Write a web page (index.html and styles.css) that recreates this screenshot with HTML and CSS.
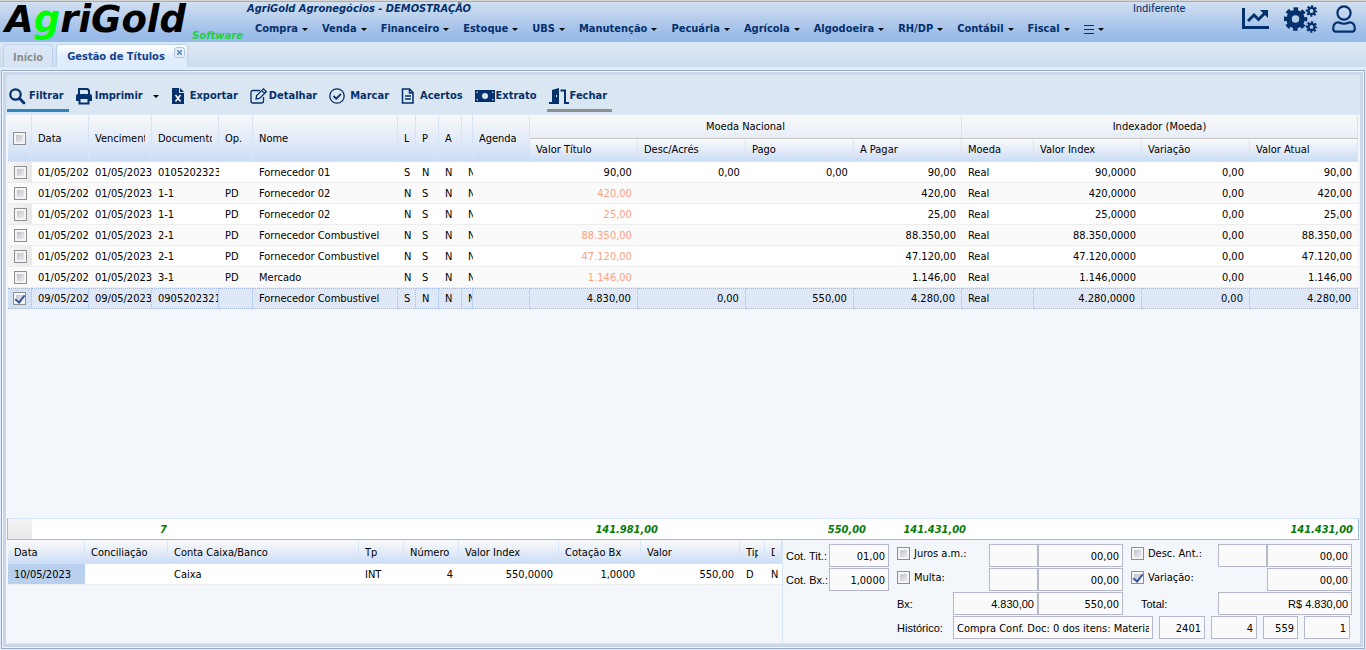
FILE: index.html
```html
<!DOCTYPE html>
<html lang="pt-BR">
<head>
<meta charset="utf-8">
<title>AgriGold Agronegócios - Gestão de Títulos</title>
<link rel="stylesheet" href="styles.css">
</head>
<body>
<header class="top">
  <div class="logo"><span class="logo-name">A<span class="logo-g">g</span>riGold</span><span class="logo-sub">Software</span></div>
  <div class="top-main">
    <div class="company">AgriGold Agronegócios - DEMOSTRAÇÃO</div>
    <nav class="menu">
      <button>Compra</button><button>Venda</button><button>Financeiro</button><button>Estoque</button><button>UBS</button><button>Manutenção</button><button>Pecuária</button><button>Agrícola</button><button>Algodoeira</button><button>RH/DP</button><button>Contábil</button><button>Fiscal</button><button aria-label="Mais"><svg width="10" height="9" viewBox="0 0 10 9"><path d="M0 .5h10M0 4.5h10M0 8.5h10" stroke="#04306c"/></svg></button>
    </nav>
  </div>
  <div class="mood">Indiferente</div>
  <div class="top-icons">
    <button aria-label="Gráficos"><svg width="28" height="22" viewBox="0 0 28 22"><path d="M1.500 0v19.500h25.500" fill="none" stroke="#04306c" stroke-width="3"/><path d="M6 13l6-6 4.500 4.500 7-7" fill="none" stroke="#04306c" stroke-width="3"/><path d="M18 2h8v8z" fill="#04306c"/></svg></button>
    <button aria-label="Configurações"><svg width="34" height="28" viewBox="0 0 34 28" fill="none" stroke="#04306c"><circle cx="11.500" cy="14" r="6.500" stroke-width="5.500"/><circle cx="11.500" cy="14" r="9.800" stroke-width="4" stroke-dasharray="4.400 3.297" stroke-dashoffset="2.200"/><circle cx="27.500" cy="6" r="3.100" stroke-width="2.400"/><circle cx="27.500" cy="6" r="4.600" stroke-width="2.400" stroke-dasharray="2 1.613" stroke-dashoffset="1"/><circle cx="27.500" cy="22" r="3.100" stroke-width="2.400"/><circle cx="27.500" cy="22" r="4.600" stroke-width="2.400" stroke-dasharray="2 1.613" stroke-dashoffset="1"/></svg></button>
    <button aria-label="Usuário"><svg width="24" height="28" viewBox="0 0 24 28" fill="none" stroke="#04306c" stroke-width="2.200"><circle cx="12" cy="8" r="6.600"/><path d="M7 17.500Q12 20 17 17.500C21 17 23 20 22.800 24Q22.500 26.700 20 26.700H4Q1.500 26.700 1.200 24C1 20 3 17 7 17.500z"/></svg></button>
  </div>
</header>

<div class="tabs" role="tablist">
  <button class="tab" role="tab" aria-selected="false">Início</button>
  <div class="tab tab-on"><button role="tab" aria-selected="true">Gestão de Títulos</button><button class="tab-close" aria-label="Fechar aba"><svg width="5" height="5" viewBox="0 0 5 5"><path d="M0 0l5 5M5 0L0 5" stroke="#6f97cc" stroke-width="2"/></svg></button></div>
</div>

<main class="frame"><div class="panel">
  <div class="toolbar">
    <button class="tool tool-blue"><svg width="17" height="17" viewBox="0 0 17 17"><circle cx="6.500" cy="6.500" r="5.200" fill="none" stroke="#04306c" stroke-width="2.200"/><path d="M10.300 10.300l4.700 4.700" stroke="#04306c" stroke-width="2.800" stroke-linecap="round"/></svg><span>Filtrar</span></button>
    <button class="tool"><svg width="16" height="17" viewBox="0 0 16 17"><path d="M3 6V1h8.500L13 2.500V6" fill="none" stroke="#04306c" stroke-width="2"/><path d="M0 8q0-2 2-2h12q2 0 2 2v5h-3v-2H3v2H0z" fill="#04306c"/><path d="M3.500 11v4.500h9V11" fill="none" stroke="#04306c" stroke-width="2"/></svg><span>Imprimir</span><i class="caret"></i></button>
    <button class="tool"><svg width="14" height="16" viewBox="0 0 14 16"><path d="M1 0h7v5h5v11H1z" fill="#04306c"/><path d="M9 0l4 4H9z" fill="#04306c"/><path d="M4.500 7l5 6.500M9.500 7l-5 6.500" stroke="#fff" stroke-width="1.500"/></svg><span>Exportar</span></button>
    <button class="tool tool-near"><svg width="18" height="16" viewBox="0 0 18 16" fill="none" stroke="#04306c" stroke-width="1.300"><path d="M10 2.500H3Q1 2.500 1 4.500V13q0 2 2 2h8.500q2 0 2-2V9"/><path d="M6 11l.7-3.500L13.500.9l2.800 2.800-6.800 6.700zM11.700 2.600l2.800 2.800"/></svg><span>Detalhar</span></button>
    <button class="tool"><svg width="16" height="16" viewBox="0 0 16 16" fill="none" stroke="#04306c"><circle cx="8" cy="8" r="7.200" stroke-width="1.300"/><path d="M4.500 8l2.700 2.700L12 5.800" stroke-width="1.800"/></svg><span>Marcar</span></button>
    <button class="tool"><svg width="14" height="16" viewBox="0 0 14 16" fill="none" stroke="#04306c" stroke-width="1.500"><path d="M1.500 1h7L12 4.500V15H1.500zM8.500 1v4H12M4 8h6M4 11h6"/></svg><span>Acertos</span></button>
    <button class="tool tool-near"><svg width="20" height="12" viewBox="0 0 20 12"><path d="M0 0h20v12H0z" fill="#04306c"/><circle cx="10" cy="6" r="3" fill="#dae6f1"/><path d="M2 3V2h1M17 2h1v1M2 9v1h1M17 10h1V9" stroke="#dae6f1" fill="none"/></svg><span>Extrato</span></button>
    <button class="tool tool-near tool-gray"><svg width="20" height="16" viewBox="0 0 20 16"><path d="M0 14h3V2l7-2v16H0zM7 7v2h1V7z" fill="#04306c" fill-rule="evenodd"/><path d="M11.500 2.500H16V15h4" fill="none" stroke="#04306c" stroke-width="2"/></svg><span>Fechar</span></button>
  </div>

  <div class="grid-area">
  <table class="grid">
    <colgroup><col class="c24"><col class="c57"><col class="c63"><col class="c67"><col class="c34"><col><col class="c18"><col class="c23"><col class="c23"><col class="c11"><col class="c57"><col class="c108"><col class="c108"><col class="c108"><col class="c108"><col class="c72"><col class="c108"><col class="c108"><col class="c108"></colgroup>
    <thead>
      <tr><th rowspan="2" class="ck"><input type="checkbox" aria-label="Selecionar todos"></th><th rowspan="2"><div>Data</div></th><th rowspan="2"><div>Vencimento</div></th><th rowspan="2"><div>Documento</div></th><th rowspan="2"><div>Op.</div></th><th rowspan="2"><div>Nome</div></th><th rowspan="2"><div>L</div></th><th rowspan="2"><div>P</div></th><th rowspan="2"><div>A</div></th><th rowspan="2"></th><th rowspan="2"><div>Agenda</div></th><th colspan="4" class="group">Moeda Nacional</th><th colspan="4" class="group">Indexador (Moeda)</th></tr>
      <tr class="sub"><th>Valor Título</th><th>Desc/Acrés</th><th>Pago</th><th>A Pagar</th><th>Moeda</th><th>Valor Index</th><th>Variação</th><th>Valor Atual</th></tr>
    </thead>
    <tbody>
      <tr><td class="ck"><input type="checkbox" aria-label="Linha 1"></td><td>01/05/2023</td><td>01/05/2023</td><td>01052023231</td><td></td><td>Fornecedor 01</td><td>S</td><td>N</td><td>N</td><td>N</td><td></td><td class="n">90,00</td><td class="n">0,00</td><td class="n">0,00</td><td class="n">90,00</td><td>Real</td><td class="n">90,0000</td><td class="n">0,00</td><td class="n">90,00</td></tr>
      <tr><td class="ck"><input type="checkbox" aria-label="Linha 2"></td><td>01/05/2023</td><td>01/05/2023</td><td>1-1</td><td>PD</td><td>Fornecedor 02</td><td>N</td><td>S</td><td>N</td><td>N</td><td></td><td class="n due">420,00</td><td></td><td></td><td class="n">420,00</td><td>Real</td><td class="n">420,0000</td><td class="n">0,00</td><td class="n">420,00</td></tr>
      <tr><td class="ck"><input type="checkbox" aria-label="Linha 3"></td><td>01/05/2023</td><td>01/05/2023</td><td>1-1</td><td>PD</td><td>Fornecedor 02</td><td>N</td><td>S</td><td>N</td><td>N</td><td></td><td class="n due">25,00</td><td></td><td></td><td class="n">25,00</td><td>Real</td><td class="n">25,0000</td><td class="n">0,00</td><td class="n">25,00</td></tr>
      <tr><td class="ck"><input type="checkbox" aria-label="Linha 4"></td><td>01/05/2023</td><td>01/05/2023</td><td>2-1</td><td>PD</td><td>Fornecedor Combustivel</td><td>N</td><td>S</td><td>N</td><td>N</td><td></td><td class="n due">88.350,00</td><td></td><td></td><td class="n">88.350,00</td><td>Real</td><td class="n">88.350,0000</td><td class="n">0,00</td><td class="n">88.350,00</td></tr>
      <tr><td class="ck"><input type="checkbox" aria-label="Linha 5"></td><td>01/05/2023</td><td>01/05/2023</td><td>2-1</td><td>PD</td><td>Fornecedor Combustivel</td><td>N</td><td>S</td><td>N</td><td>N</td><td></td><td class="n due">47.120,00</td><td></td><td></td><td class="n">47.120,00</td><td>Real</td><td class="n">47.120,0000</td><td class="n">0,00</td><td class="n">47.120,00</td></tr>
      <tr><td class="ck"><input type="checkbox" aria-label="Linha 6"></td><td>01/05/2023</td><td>01/05/2023</td><td>3-1</td><td>PD</td><td>Mercado</td><td>N</td><td>S</td><td>N</td><td>N</td><td></td><td class="n due">1.146,00</td><td></td><td></td><td class="n">1.146,00</td><td>Real</td><td class="n">1.146,0000</td><td class="n">0,00</td><td class="n">1.146,00</td></tr>
      <tr class="sel"><td class="ck"><input type="checkbox" checked aria-label="Linha 7"></td><td>09/05/2023</td><td>09/05/2023</td><td>0905202321</td><td></td><td>Fornecedor Combustivel</td><td>S</td><td>N</td><td>N</td><td>N</td><td></td><td class="n">4.830,00</td><td class="n">0,00</td><td class="n">550,00</td><td class="n">4.280,00</td><td>Real</td><td class="n">4.280,0000</td><td class="n">0,00</td><td class="n">4.280,00</td></tr>
    </tbody>
  </table>
  </div>

  <div class="totals"><span class="t-ck"></span><span class="t-count">7</span><span class="t-title">141.981,00</span><span class="t-paid">550,00</span><span class="t-due">141.431,00</span><span class="t-now">141.431,00</span></div>

  <div class="bottom">
    <div class="moves">
      <table class="grid moves-grid">
        <colgroup><col class="c77"><col class="c83"><col><col class="c45"><col class="c55"><col class="c100"><col class="c82"><col class="c99"><col class="c25"><col class="c17"></colgroup>
        <thead><tr><th><div>Data</div></th><th><div>Conciliação</div></th><th><div>Conta Caixa/Banco</div></th><th><div>Tp</div></th><th><div>Número</div></th><th><div>Valor Index</div></th><th><div>Cotação Bx</div></th><th><div>Valor</div></th><th><div>Tipo</div></th><th><div>D</div></th></tr></thead>
        <tbody><tr><td class="cur">10/05/2023</td><td></td><td>Caixa</td><td>INT</td><td class="n">4</td><td class="n">550,0000</td><td class="n">1,0000</td><td class="n">550,00</td><td>D</td><td>N</td></tr></tbody>
      </table>
    </div>
    <form class="form">
      <div class="quotes">
        <div class="line"><label class="plain w43" for="ct">Cot. Tit.:</label><input id="ct" class="w60" value="01,00"></div>
        <div class="line"><label class="plain w43" for="cb">Cot. Bx.:</label><input id="cb" class="w60" value="1,0000"></div>
      </div>
      <div class="fields">
        <div class="line"><label class="check w92"><input type="checkbox">Juros a.m.:</label><input class="w49" aria-label="Juros %"><input class="w85" value="00,00" aria-label="Juros"><label class="check w87 gap8"><input type="checkbox">Desc. Ant.:</label><input class="w49" aria-label="Desconto %"><input class="w85" value="00,00" aria-label="Desconto"></div>
        <div class="line"><label class="check w92"><input type="checkbox">Multa:</label><input class="w49" aria-label="Multa %"><input class="w85" value="00,00" aria-label="Multa"><label class="check w136 gap8"><input type="checkbox" checked>Variação:</label><input class="w85" value="00,00" aria-label="Variação"></div>
        <div class="line"><label class="plain w56" for="bx">Bx:</label><input id="bx" class="w85 alt" value="4.830,00"><input class="w85" value="550,00" aria-label="Bx valor"><label class="plain w77 gap18" for="tot">Total:</label><input id="tot" class="w134 alt" value="R$ 4.830,00"></div>
        <div class="line line-codes"><label class="plain w56" for="his">Histórico:</label><input id="his" class="w200 left" value="Compra Conf. Doc: 0 dos itens: Material"><input class="w46" value="2401" aria-label="Código 1"><input class="w46" value="4" aria-label="Código 2"><input class="w35" value="559" aria-label="Código 3"><input class="w46" value="1" aria-label="Código 4"></div>
      </div>
    </form>
  </div>
</div></main>
</body>
</html>
```
FILE: styles.css
```css
* { box-sizing: border-box; }
body {
  margin: 0;
  min-height: 100vh;
  display: flex;
  flex-direction: column;
  background: #deecfd;
  color: #000;
  font: 11px/14px "DejaVu Sans Condensed", "DejaVu Sans", sans-serif;
}
button { font: inherit; color: inherit; border: 0; padding: 0; background: none; }
svg { display: block; flex: none; }

.top {
  display: flex;
  height: 42px;
  padding-left: 5px;
  border-top: 1px solid #d5d5d5;
  background: linear-gradient(#d3e1f1, #b5cdec 45%, #99bbe8 85%);
  box-shadow: inset 0 1px #a9acb2;
  color: #04306c;
}
.logo { position: relative; width: 242px; flex: none; color: #000; font-family: "DejaVu Sans", sans-serif; font-weight: bold; font-style: italic; }
.logo-name { display: block; font-size: 37px; line-height: 37px; }
.logo-g { color: #0f0; }
.logo-sub { position: absolute; right: 4px; bottom: 1px; color: #1ed33c; font-size: 10px; line-height: 10px; }
.top-main { flex: 1; min-width: 0; padding-top: 1px; }
.company { font-weight: bold; font-style: italic; }
.menu { display: flex; gap: 14px; padding: 6px 0 0 8px; font-weight: bold; }
.menu button { display: flex; align-items: center; gap: 4px; white-space: nowrap; }
.menu button::after, .caret {
  content: "";
  width: 0;
  border: 3px solid transparent;
  border-top-color: #000;
  border-bottom: 0;
}
.mood { padding-top: 1px; width: 109px; flex: none; font-family: Roboto, sans-serif; }
.top-icons { display: flex; gap: 14px; align-items: center; padding: 0 10px 6px 0; flex: none; }

.tabs {
  display: flex;
  gap: 3px;
  height: 28px;
  padding: 2px 3px 0;
  background: linear-gradient(#dce7f5, #cddded 25px, #deecfd 25px);
  font-weight: bold;
}
.tab {
  height: 23px;
  padding: 3px 9px 0;
  border: 1px solid #bcd2ee;
  border-bottom: 0;
  border-radius: 4px 4px 0 0;
  background: linear-gradient(#dce8f7, #d5e3f3);
  color: #8c8c8c;
}
.tab-on { display: flex; align-items: flex-start; gap: 9px; padding: 2px 2px 0 10px; background: linear-gradient(#fff, #deecfd 60%); color: #15428b; }
.tab-on button:first-child { padding-top: 3px; }
.tab-close { width: 11px; height: 11px; padding: 2px; border: 1px solid #a9c4e8; border-radius: 3px; background: #e8f0fb; }

.frame {
  flex: 1;
  display: flex;
  margin: 0 1px 1px;
  padding: 1px;
  border: 1px solid #99a9c7;
  background: #f0f5fc;
}
.panel { flex: 1; min-width: 0; display: flex; flex-direction: column; border: 3px solid #cbd6e8; background: #f3f6fb; }
.toolbar { display: flex; gap: 5px; height: 40px; padding: 8px 1px 0; background: #dae6f1; border-bottom: 1px solid #deecfd; }
.tool {
  display: flex;
  align-items: center;
  gap: 3px;
  height: 29px;
  padding: 0 5px 0 2px;
  border-bottom: 3px solid transparent;
  color: #04306c;
  font-weight: bold;
}
.tool-near { gap: 1px; }
.tool:nth-child(n+3):not(.tool-near) { gap: 5px; }
.caret { margin-left: 7px; }
.tool-blue { border-bottom-color: #2f86bd; }
.tool-gray { border-bottom-color: #8d9196; }

.grid-area { flex: 1; padding: 0 2px; }
.grid { width: 100%; table-layout: fixed; border-collapse: separate; border-spacing: 0; }
.grid th {
  height: 47px;
  padding: 1px 6px 0;
  border-right: 1px solid #d5e4f7;
  border-bottom: 1px solid #d5e4f7;
  background: linear-gradient(#f9f9fa, #e4ecf8 50%, #cbddf6);
  font-weight: normal;
  text-align: left;
  white-space: nowrap;
  overflow: hidden;
}
.grid th div { overflow: hidden; }
.grid .group { height: 24px; padding-top: 0; background: linear-gradient(#f9f9fa, #e8eef7); border-bottom-color: #c5c5c5; text-align: center; }
.grid .sub th { height: 23px; padding: 0 6px 1px; background: linear-gradient(#f9f9fa, #e4ecf8 50%, #cbddf6); }
.grid td {
  height: 21px;
  padding: 2px 0 0 6px;
  border-bottom: 1px solid #ededed;
  background: #fff;
  overflow: hidden;
  white-space: nowrap;
}
.grid tbody tr:nth-child(even) td { background: #fafafa; }
.grid .n { padding: 2px 6px 0 0; text-align: right; }
.grid .due { color: #ffa083; }
.grid .ck { padding: 1px 0 0; text-align: center; }
.grid tbody td.ck { background: linear-gradient(90deg, #f5f5f5, #e9e9e9); }
.grid .sel td { background: #dfe8f6; border: 1px dotted #a3bae9; border-left: 0; padding-top: 1px; }
.grid .sel td.ck { background: #d3e1f5; padding-top: 0; }
.c11 { width: 11px; } .c17 { width: 17px; } .c18 { width: 18px; } .c23 { width: 23px; }
.c24 { width: 24px; } .c25 { width: 25px; } .c34 { width: 34px; } .c45 { width: 45px; }
.c55 { width: 55px; } .c57 { width: 57px; } .c63 { width: 63px; } .c67 { width: 67px; }
.c72 { width: 72px; } .c77 { width: 77px; } .c82 { width: 82px; } .c83 { width: 83px; }
.c99 { width: 99px; } .c100 { width: 100px; } .c108 { width: 108px; }

input[type="checkbox"] {
  appearance: none;
  position: relative;
  width: 13px;
  height: 13px;
  margin: 0;
  flex: none;
  vertical-align: middle;
  border: 1px solid #8e8f8f;
  background: linear-gradient(135deg, #b4b9c2, #f6f6f6);
  box-shadow: inset 0 0 0 2px #f4f4f4;
}
input[type="checkbox"]:checked::after {
  content: "";
  position: absolute;
  left: 3px;
  top: 0;
  width: 4px;
  height: 8px;
  border: solid #3a55a0;
  border-width: 0 2px 2px 0;
  transform: rotate(38deg);
}

.totals {
  display: flex;
  height: 22px;
  margin: 0 1px;
  border: 1px solid #99bbe8;
  border-top-color: #d5e4f7;
  background: #fff;
  color: #067a06;
  font-weight: bold;
  font-style: italic;
  line-height: 21px;
  text-align: right;
}
.t-ck { width: 24px; background: linear-gradient(#f4f4f4, #e8e8e8); }
.t-count { width: 135px; }
.t-title { flex: 1; }
.t-paid { width: 208px; }
.t-due { width: 100px; }
.t-now { width: 392px; padding-right: 5px; }

.bottom { display: grid; grid-template-columns: minmax(0, 1fr) 577px; height: 104px; padding: 1px 0 0 2px; }
.moves { border-right: 1px solid #d5e4f7; border-bottom: 1px solid #d5e4f7; }
.moves-grid th { height: 23px; }
.moves-grid td.cur { background: #b8cfee; }

.form { display: flex; gap: 8px; padding: 3px 0 0 3px; border-bottom: 1px solid #d5e4f7; }
.line { display: flex; height: 24px; }
.line-codes { gap: 6px; }
.line-codes .plain { margin-right: -6px; }
.form input:not([type]) {
  height: 23px;
  padding: 1px 3px 0;
  border: 1px solid #b5b8c8;
  border-radius: 0;
  background: #fafafa;
  font: inherit;
  text-align: right;
}
.form input.left { text-align: left; }
.form input.alt, .plain { font-family: "Liberation Sans", sans-serif; }
.plain { padding-top: 5px; white-space: nowrap; }
.check { display: flex; gap: 4px; height: 19px; align-items: center; white-space: nowrap; }
.gap8 { margin-left: 8px; }
.gap18 { margin-left: 18px; }
.w35 { width: 35px; } .w43 { width: 43px; } .w46 { width: 46px; } .w49 { width: 49px; }
.w56 { width: 56px; } .w60 { width: 60px; } .w77 { width: 77px; } .w85 { width: 85px; }
.w87 { width: 87px; } .w92 { width: 92px; } .w134 { width: 134px; } .w136 { width: 136px; } .w200 { width: 200px; }
```
